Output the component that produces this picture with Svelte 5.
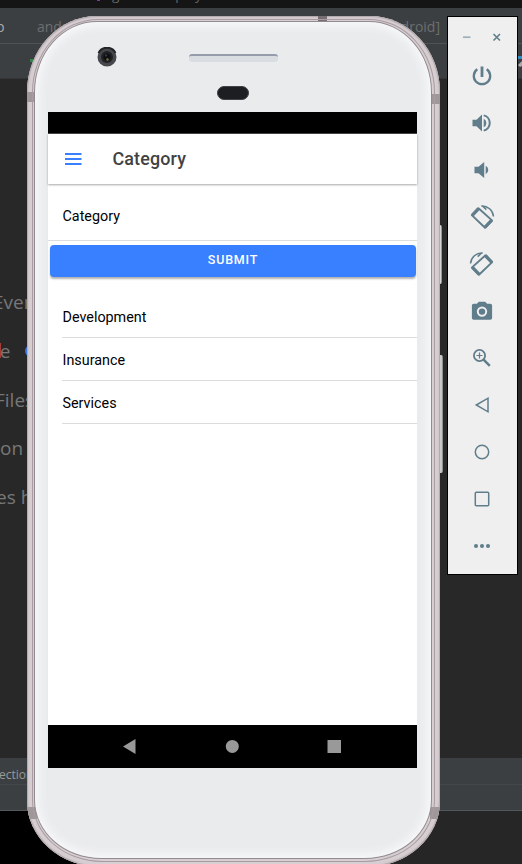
<script>
  const rows = ['Development', 'Insurance', 'Services'];
  const code = [
    { t: 'Even', x: -7, y: 288 },
    { t: 'le', x: -5, y: 337 },
    { t: 'Files', x: -5, y: 386 },
    { t: 'on', x: 0, y: 434 },
    { t: 'es h', x: -4, y: 483 }
  ];
  const tools = ['power', 'up', 'down', 'left', 'right', 'camera', 'zoom', 'back', 'home', 'recent', 'more'];
</script>

<div class="desktop">
  <div class="ide" aria-hidden="true">
    <div class="strip top"></div>
    <div class="strip tabs"></div>
    <div class="strip crumbs"></div>
    <div class="editor"></div>
    <div class="strip status"></div>
    <div class="strip foot"></div>
    <div class="below"></div>
  </div>
  <span class="bg title">gradle.display</span>
  <i class="purple"></i>
  <span class="bg tab lead">p</span>
  <span class="bg tab first">andr</span>
  <span class="bg tab second">ndroid]</span>
  {#each code as c}
    <span class="bg code" style="left:{c.x}px;top:{c.y}px">{c.t}</span>
  {/each}
  <i class="red"></i>
  <i class="blue"></i>
  <i class="green"></i>
  <span class="bg section">ection</span>
  <svg class="edge" width="4" height="16" viewBox="0 0 4 16"><path d="M0 0h4v3H0z" fill="#318dc6"/><path d="M0 9l4-4v5l-2 1z" fill="#aaa"/></svg>

  <i class="key one"></i>
  <i class="key two"></i>
  <div class="phone">
    <i class="seam s1"></i><i class="seam s2"></i><i class="seam s3"></i><i class="seam s4"></i><i class="seam s5"></i>
    <div class="rim"></div>
    <div class="face"></div>
    <svg class="camera" width="20" height="20" viewBox="0 0 20 20">
      <circle cx="10" cy="10" r="9.5" fill="#47484c"/>
      <path d="M1.5 6a9.5 9.5 0 0 1 17 0" fill="none" stroke="#242529" stroke-width="2"/>
      <circle cx="10" cy="10" r="6" fill="#202126"/><circle cx="10" cy="10" r="3.5" fill="#0e0f12"/>
      <circle cx="10.5" cy="12.5" r="1.2" fill="#77713a"/><circle cx="9" cy="8.5" r="1" fill="#3d4354"/>
    </svg>
    <div class="speaker"></div>
    <div class="sensor"></div>

    <div class="screen">
      <div class="sys"></div>
      <header>
        <svg width="17" height="12" viewBox="0 0 17 12"><path d="M0 1h16.500M0 6h16.500M0 11h16.500" stroke="#3880ff" stroke-width="1.800"/></svg>
        <h1>Category</h1>
      </header>
      <main>
        <div class="field">Category</div>
        <button>SUBMIT</button>
        <ul>
          {#each rows as r}<li>{r}</li>{/each}
        </ul>
      </main>
      <nav>
        <svg width="369" height="43" viewBox="0 0 369 43" fill="#999">
          <path d="M75 21.500L87.500 14v15z"/><circle cx="184.300" cy="21.400" r="6.500"/><path d="M279.500 15H293v13h-13.500z"/>
        </svg>
      </nav>
    </div>
  </div>

  <aside>
    <div class="win">
      <svg width="38" height="10" viewBox="0 0 38 10" fill="none" stroke="#607d8b">
        <path d="M0 5.200h7.500" stroke="#9fb0b8" stroke-width="1.700"/>
        <path d="M30.500 2l6.500 6.500M37 2l-6.500 6.500" stroke-width="1.600"/>
      </svg>
    </div>
    {#each tools as k}
      <div class="tool">
        <svg width="26" height="26" viewBox="-13 -13 26 26" fill="none" stroke="#607d8b" stroke-width="1.500">
          {#if k === 'power'}
            <path d="M0-9.500V1" stroke-width="2.800"/>
            <path d="M-4.700-6.700a8.200 8.200 0 1 0 9.400 0" stroke-width="2.300"/>
          {:else if k === 'up'}
            <path d="M-9.500-3.200h4L0-8.500v17l-5.500-5.300h-4z" fill="#607d8b" stroke="none"/>
            <path d="M1.700-4.300a4.800 4.800 0 0 1 0 8.600z" fill="#607d8b" stroke="none"/>
            <path d="M1.700-7.600a7.800 7.800 0 0 1 0 15.200" stroke-width="2"/>
          {:else if k === 'down'}
            <path d="M-7.500-3.200h4L2.200-8v16l-5.700-4.800h-4z" fill="#607d8b" stroke="none"/>
            <path d="M3.700-4.200a4.700 4.700 0 0 1 0 8.400z" fill="#607d8b" stroke="none"/>
          {:else if k === 'left' || k === 'right'}
            <g transform={k === 'right' ? 'scale(-1 1)' : ''}>
              <path d="M-3.500-8.700L10 3.400 3 10.800-10.200-1.900z" stroke-width="1.900" stroke-linejoin="round"/>
              <path d="M-9.800-1.700L-3.300-8.500M2.800 10.400l7-7.200" stroke-width="3.300"/>
              <path d="M-.5-11.100A11.500 11.500 0 0 1 11.500-.5" stroke-width="1.500"/>
              <path d="M-1-11.400l4.800 4.700 1-1.200-3-3z" fill="#607d8b" stroke="none"/>
            </g>
          {:else if k === 'camera'}
            <path fill-rule="evenodd" d="M-3.200-9.300h6.400l1.900 2h3.200q1.800 0 1.800 1.800V7q0 1.800-1.800 1.800H-8.300q-1.800 0-1.800-1.800V-5.500q0-1.800 1.800-1.800h3.200zM0-4.600a5.200 5.200 0 1 0 0 10.400a5.200 5.200 0 1 0 0-10.400z" fill="#607d8b" stroke="none"/>
            <circle cx="0" cy=".6" r="3.200" fill="#607d8b" stroke="none"/>
          {:else if k === 'zoom'}
            <circle cx="-2.500" cy="-2.500" r="5.600" stroke-width="1.800"/>
            <path d="M-5.500-2.500h6M-2.500-5.500v6" stroke-width="1.200"/>
            <path d="M1.600 1.600L7.800 7.900" stroke-width="2.500"/>
          {:else if k === 'back'}
            <path d="M-5.700 0L6-6.800V6.800z"/>
          {:else if k === 'home'}
            <circle cx="0" cy="0" r="6.700"/>
          {:else if k === 'recent'}
            <rect x="-6.700" y="-6.700" width="13.400" height="13.400" rx="1"/>
          {:else}
            <g fill="#607d8b" stroke="none"><circle cx="-6" r="2.050"/><circle r="2.050"/><circle cx="6" r="2.050"/></g>
          {/if}
        </svg>
      </div>
    {/each}
  </aside>
</div>

<style>
  :global(body) { margin: 0; background: #282828; }
  * { box-sizing: border-box; }
  .desktop { position: relative; width: 522px; height: 864px; overflow: hidden; font-family: Roboto, "Liberation Sans", sans-serif; }
  .ide { display: flex; flex-direction: column; height: 864px; }
  .strip { flex: none; background: #3c3f41; }
  .top { height: 8px; background: #151515; }
  .tabs { height: 36px; border-bottom: 1px solid #505355; }
  .crumbs { height: 35px; border-bottom: 1px solid #333536; }
  .editor { flex: 1; background: #282828; }
  .status { height: 27px; border-bottom: 1px solid #45484a; }
  .foot { height: 26px; border-bottom: 1px solid #55585a; }
  .below { height: 53px; background: linear-gradient(90deg, #000 0 230px, #262626 230px); }

  .bg { position: absolute; white-space: nowrap; color: #777; font-family: "Open Sans", "Noto Sans", sans-serif; }
  .title { left: 112px; top: -15px; font-size: 13.5px; line-height: 20px; color: #666; letter-spacing: .2px; }
  .tab { top: 17px; font-size: 14px; line-height: 20px; color: #6c6e70; }
  .lead { left: -4px; color: #a9abad; }
  .first { left: 37px; }
  .second { right: 82px; }
  .code { font-size: 19px; line-height: 28px; color: #777; }
  .section { left: -1px; top: 766px; font-size: 12px; line-height: 18px; color: #999; }
  .red, .blue, .green, .purple { position: absolute; }
  .red { left: 0; top: 343px; width: 1px; height: 15px; background: #a63c35; }
  .blue { left: 25px; top: 345px; width: 12px; height: 12px; border: 2px solid #3b78e7; border-radius: 50%; }
  .green { left: 30px; top: 59px; width: 3px; height: 3px; background: #35824a; }
  .purple { left: 97px; top: 0; width: 3px; height: 1px; background: #7440a0; }
  .edge { position: absolute; left: 518px; top: 56px; }

  .key { position: absolute; left: 437px; width: 5px; background: linear-gradient(90deg, #999, #d3d5d2 70%, #777); border-radius: 0 2px 2px 0; }
  .one { top: 225px; height: 59px; }
  .two { top: 355px; height: 118px; width: 6px; }

  .phone {
    position: absolute; left: 27px; top: 16px; width: 413px; height: 851px; padding: 96px 0 0 21px; overflow: hidden;
    border-radius: 70px 70px 74px 74px / 76px 76px 66px 66px;
    background: #d6ced1; box-shadow: inset 0 0 0 1px #b5abaf, inset 0 0 2px 1px #c0b6ba;
  }
  .rim { position: absolute; inset: 3px 5px 5px; border: 1px solid #a79ca1; border-radius: 66px 66px 70px 70px / 73px 73px 62px 62px; }
  .face {
    position: absolute; inset: 5px 8px 8px 7px; border-radius: 63px 63px 67px 67px / 71px 71px 59px 59px; background: #eaebed;
    border: 1px solid #938a8f; box-shadow: inset 0 0 8px 4px #f7f8f9;
  }
  .seam { position: absolute; background: #a0979b; }
  .s1 { left: 0; top: 76px; width: 8px; height: 10px; }
  .s2 { right: 0; top: 78px; width: 8px; height: 10px; }
  .s3 { left: 291px; top: 0; width: 9px; height: 5px; background: #776e73; }
  .s4 { left: 0; top: 791px; width: 10px; height: 12px; }
  .s5 { right: 0; top: 791px; width: 10px; height: 12px; }
  .camera { position: absolute; left: 69.500px; top: 30.500px; }
  .speaker { position: absolute; left: 162px; top: 38px; width: 89px; height: 8px; border-radius: 3px; background: #d9dce1; border-top: 2px solid #969cac; }
  .sensor { position: absolute; left: 190px; top: 70px; width: 32px; height: 14px; border-radius: 7px; background: #1d1e22; border: 1px solid #414247; }

  .screen { position: relative; width: 369px; height: 656px; display: flex; flex-direction: column; background: #fff; }
  .sys { height: 22px; background: #000; border-bottom: 1px solid #444; flex: none; }
  header { height: 50px; flex: none; display: flex; align-items: center; gap: 31px; padding-left: 17px; box-shadow: 0 1px 2px rgba(0, 0, 0, .35); }
  header svg { margin-top: -1px; }
  h1 { margin: 0 0 0 -.5px; font-size: 17.9px; line-height: 24px; font-weight: 500; color: #424242; letter-spacing: .15px; }
  main { flex: 1; display: flex; flex-direction: column; padding-top: 5px; color: #000; font-size: 14.35px; }
  .field { height: 52px; padding: 18px 14px 0 14.500px; line-height: 20px; border-bottom: 1px solid #dedede; }
  button {
    height: 32px; margin: 4px 1px 0 2px; padding: 0 0 3px; border: 0; border-radius: 4px; background: #3880ff; color: #fff;
    font: 500 12.5px Roboto, sans-serif; letter-spacing: .8px; box-shadow: 0 2px 2px rgba(0, 0, 0, .3);
  }
  ul { list-style: none; margin: 18px 0 0; padding: 0 0 0 14px; }
  li { height: 43px; line-height: 20px; padding: 13px 0 0 .5px; border-bottom: 1px solid #dcdcdc; }
  nav { height: 43px; background: #000; flex: none; }
  nav svg { display: block; }

  aside { position: absolute; left: 447px; top: 16px; width: 71px; height: 559px; border: 1px solid #000; background: #efefef; display: flex; flex-direction: column; align-items: center; padding-right: 1px; }
  .win { height: 35px; width: 100%; padding: 15px 0 0 15px; flex: none; }
  .win svg, .tool svg { display: block; }
  .tool { height: 47px; flex: none; display: flex; align-items: center; justify-content: center; }
</style>
